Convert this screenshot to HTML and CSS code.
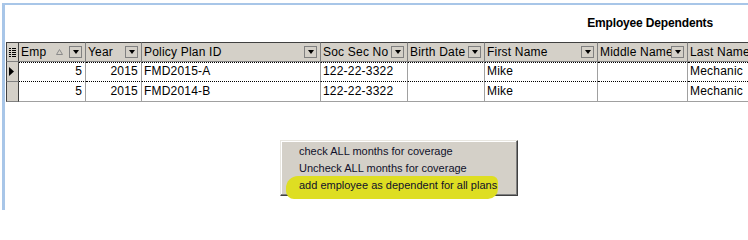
FILE: index.html
```html
<!DOCTYPE html>
<html>
<head>
<meta charset="utf-8">
<link rel="stylesheet" href="styles.css">
</head>
<body>
<div class="window">
  <div class="title-bar"><span class="title">Employee Dependents</span></div>
  <div class="grid">
    <div class="grid-row head">
      <div class="cell sel-head">
        <svg width="7" height="9" viewBox="0 0 7 9"><g fill="#000"><rect x="0" y="0" width="2" height="1"/><rect x="3" y="0" width="4" height="1"/><rect x="0" y="2" width="2" height="1"/><rect x="3" y="2" width="4" height="1"/><rect x="0" y="4" width="2" height="1"/><rect x="3" y="4" width="4" height="1"/><rect x="0" y="6" width="2" height="1"/><rect x="3" y="6" width="4" height="1"/><rect x="0" y="8" width="2" height="1"/><rect x="3" y="8" width="4" height="1"/></g></svg>
      </div>
      <div class="cell hcell"><span class="label">Emp</span><svg class="sort" width="7" height="6" viewBox="0 0 7 6"><polygon points="3.5,0.5 6.5,5.5 0.5,5.5" fill="none" stroke="#8a8a8a" stroke-width="1"/></svg><span class="dd"></span></div>
      <div class="cell hcell"><span class="label">Year</span><span class="dd"></span></div>
      <div class="cell hcell"><span class="label">Policy Plan ID</span><span class="dd"></span></div>
      <div class="cell hcell"><span class="label">Soc Sec No</span><span class="dd"></span></div>
      <div class="cell hcell"><span class="label">Birth Date</span><span class="dd"></span></div>
      <div class="cell hcell"><span class="label">First Name</span><span class="dd"></span></div>
      <div class="cell hcell"><span class="label">Middle Name</span><span class="dd"></span></div>
      <div class="cell hcell last"><span class="label">Last Name</span></div>
    </div>
    <div class="grid-row data current">
      <div class="cell sel"><svg width="5" height="9" viewBox="0 0 5 9"><polygon points="0,0 5,4.5 0,9" fill="#000"/></svg></div>
      <div class="cell num">5</div>
      <div class="cell num">2015</div>
      <div class="cell">FMD2015-A</div>
      <div class="cell">122-22-3322</div>
      <div class="cell"></div>
      <div class="cell">Mike</div>
      <div class="cell"></div>
      <div class="cell last">Mechanic</div>
    </div>
    <div class="grid-row data">
      <div class="cell sel"></div>
      <div class="cell num">5</div>
      <div class="cell num">2015</div>
      <div class="cell">FMD2014-B</div>
      <div class="cell">122-22-3322</div>
      <div class="cell"></div>
      <div class="cell">Mike</div>
      <div class="cell"></div>
      <div class="cell last">Mechanic</div>
    </div>
  </div>
</div>
<div class="menu">
  <div class="marker"></div>
  <div class="item">check ALL months for coverage</div>
  <div class="item">Uncheck ALL months for coverage</div>
  <div class="item">add employee as dependent for all plans</div>
</div>
</body>
</html>
```

FILE: styles.css
```css
html, body {
  margin: 0;
  padding: 0;
  background: #ffffff;
}
body {
  width: 748px;
  height: 210px;
  overflow: hidden;
  position: relative;
  font-family: "Liberation Sans", Arial, sans-serif;
  color: #000;
}
.window {
  margin: 3px 0 0 2px;
  height: 210px;
  border-top: 2px solid #a8c6e8;
  border-left: 3px solid #a8c6e8;
  box-sizing: border-box;
}
.title-bar {
  display: flex;
  justify-content: flex-end;
  padding: 11px 35px 0 0;
  height: 14px;
}
.title {
  font-weight: bold;
  font-size: 12px;
  line-height: 14px;
  letter-spacing: -0.15px;
}
.grid {
  margin: 12px 0 0 1px;
  width: 760px;
  font-size: 12px;
  letter-spacing: 0.2px;
}
.grid-row {
  display: grid;
  grid-template-columns: 13px 67px 56px 179px 87px 77px 113px 90px 78px;
  height: 20px;
}
.cell {
  box-sizing: border-box;
  height: 20px;
  line-height: 18px;
  padding: 0 2px;
  white-space: nowrap;
  overflow: hidden;
}
.head .cell {
  background: #d4d0c8;
  border-top: 1px solid #404040;
  border-right: 1px solid #808080;
  border-bottom: 1px solid #808080;
  display: flex;
  align-items: center;
  padding: 0 3px 0 2px;
}
.head .sel-head {
  border-left: 1px solid #404040;
  border-right: 1px solid #404040;
  padding: 0 0 0 2px;
}
.label {
  flex: 1;
  min-width: 0;
  overflow: hidden;
  white-space: nowrap;
  text-overflow: clip;
}
.sort {
  margin-right: 6px;
  flex: none;
}
.dd {
  flex: none;
  width: 13px;
  height: 12px;
  box-sizing: border-box;
  border: 1px solid #808080;
  background: #d4d0c8;
  display: flex;
  align-items: center;
  justify-content: center;
}
.dd::after {
  content: "";
  width: 0;
  height: 0;
  border-left: 3px solid transparent;
  border-right: 3px solid transparent;
  border-top: 4px solid #000;
}
.data .cell {
  background: #fff;
  border-right: 1px solid #a0a0a0;
  border-bottom: 1px solid #a0a0a0;
}
.data .num {
  text-align: right;
  padding-right: 3px;
}
.data .sel {
  background: #d4d0c8;
  border-left: 1px solid #404040;
  border-right: 1px solid #404040;
  border-bottom: 1px solid #808080;
  display: flex;
  align-items: center;
  padding: 0 0 0 2px;
}
.current .cell:not(.sel) {
  border-bottom: 1px dotted #000;
  border-top: 1px dotted #000;
  line-height: 17px;
}
.menu {
  position: absolute;
  left: 280px;
  top: 140px;
  width: 238px;
  height: 56px;
  box-sizing: border-box;
  background: #d4d0c8;
  border-top: 1px solid #e8e6e0;
  border-left: 1px solid #e8e6e0;
  border-right: 1px solid #404040;
  border-bottom: 1px solid #404040;
  box-shadow: inset -1px -1px 0 #808080, inset 1px 1px 0 #ffffff;
  padding-top: 2px;
  font-size: 11px;
}
.item {
  height: 17px;
  line-height: 17px;
  padding-left: 18px;
  white-space: nowrap;
  position: relative;
  z-index: 1;
  color: #10102a;
}
.marker {
  position: absolute;
  left: 5px;
  top: 35px;
  width: 212px;
  height: 23px;
  border-radius: 12px 6px 10px 8px;
  background: #dede22;
  z-index: 0;
}
```
